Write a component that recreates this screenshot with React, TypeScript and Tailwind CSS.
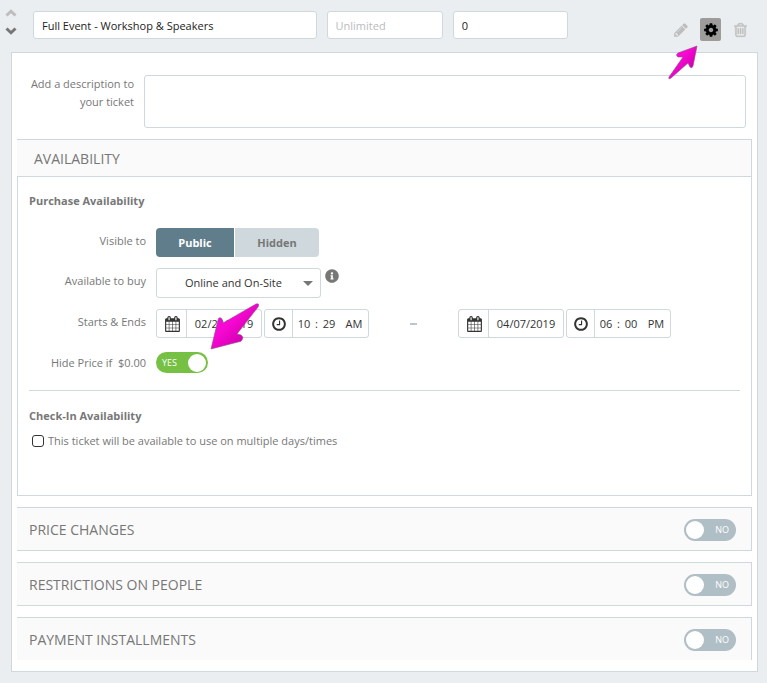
import React, { useState } from "react";
import { FaInfoCircle } from "react-icons/fa";

type IconProps = { className?: string };

const CogIcon = ({ className }: IconProps) => (
  <svg viewBox="0 0 1536 1792" fill="currentColor" className={className} aria-hidden="true">
    <path d="M1024 896q0-106-75-181t-181-75-181 75-75 181 75 181 181 75 181-75 75-181zm512-109v222q0 12-8 23t-20 13l-185 28q-19 54-39 91 35 50 107 138 10 12 10 25t-9 23q-27 37-99 108t-94 71q-12 0-26-9l-138-108q-44 23-91 38-16 136-29 186-7 28-36 28h-222q-14 0-24.500-8.500t-11.500-21.500l-28-184q-49-16-90-37l-141 107q-10 9-25 9-14 0-25-11-126-114-165-168-7-10-7-23 0-12 8-23 15-21 51-66.500t54-70.500q-27-50-41-99l-183-27q-13-2-21-12.500t-8-23.500v-222q0-12 8-23t19-13l186-28q14-46 39-92-40-57-107-138-10-12-10-24 0-10 9-23 26-36 98.500-107.500t94.500-71.500q13 0 26 10l138 107q44-23 91-38 16-136 29-186 7-28 36-28h222q14 0 24.500 8.500t11.500 21.500l28 184q49 16 90 37l142-107q9-9 24-9 13 0 25 10 129 119 165 170 7 8 7 22 0 12-8 23-15 21-51 66.500t-54 70.500q26 50 41 98l183 28q13 2 21 12.500t8 23.500z" />
  </svg>
);

const PencilIcon = ({ className }: IconProps) => (
  <svg viewBox="0 0 1536 1792" fill="currentColor" className={className} aria-hidden="true">
    <path d="M363 1536l91-91-235-235-91 91v107h128v128h107zm523-928q0-22-22-22-10 0-17 7l-542 542q-7 7-7 17 0 22 22 22 10 0 17-7l542-542q7-7 7-17zm-54-192l416 416-832 832h-416v-416zm683 96q0 53-37 90l-166 166-416-416 166-165q36-38 90-38 53 0 91 38l235 234q37 39 37 91z" />
  </svg>
);

const TrashIcon = ({ className }: IconProps) => (
  <svg viewBox="0 0 1408 1792" fill="currentColor" stroke="currentColor" strokeWidth="40" className={className} aria-hidden="true">
    <path d="M512 736v576q0 14-9 23t-23 9h-64q-14 0-23-9t-9-23v-576q0-14 9-23t23-9h64q14 0 23 9t9 23zm256 0v576q0 14-9 23t-23 9h-64q-14 0-23-9t-9-23v-576q0-14 9-23t23-9h64q14 0 23 9t9 23zm256 0v576q0 14-9 23t-23 9h-64q-14 0-23-9t-9-23v-576q0-14 9-23t23-9h64q14 0 23 9t9 23zm128 724v-948h-896v948q0 22 7 40.500t14.500 27 10.500 8.500h832q3 0 10.500-8.500t14.500-27 7-40.500zm-672-1076h448l-48-117q-7-9-17-11h-317q-10 2-17 11zm928 32v64q0 14-9 23t-23 9h-96v948q0 83-47 143.500t-113 60.500h-832q-66 0-113-58.500t-47-141.500v-952h-96q-14 0-23-9t-9-23v-64q0-14 9-23t23-9h309l70-167q15-37 54-63t79-26h320q40 0 79 26t54 63l70 167h309q14 0 23 9t9 23z" />
  </svg>
);

const ClockIcon = ({ className }: IconProps) => (
  <svg viewBox="0 0 1536 1792" fill="currentColor" className={className} aria-hidden="true">
    <path d="M896 544v448q0 14-9 23t-23 9h-320q-14 0-23-9t-9-23v-64q0-14 9-23t23-9h224v-352q0-14 9-23t23-9h64q14 0 23 9t9 23zm416 352q0-148-73-273t-198-198-273-73-273 73-198 198-73 273 73 273 198 198 273 73 273-73 198-198 73-273zm224 0q0 209-103 385.500t-279.500 279.500-385.500 103-385.500-103-279.500-279.500-103-385.500 103-385.500 279.500-279.500 385.500-103 385.500 103 279.500 279.500 103 385.500z" />
  </svg>
);

const CalendarIcon = ({ className }: IconProps) => (
  <svg viewBox="0 0 1664 1792" fill="currentColor" className={className} aria-hidden="true">
    <path d="M128 1664h288v-288h-288v288zm352 0h320v-288h-320v288zm-352-352h288v-320h-288v320zm352 0h320v-320h-320v320zm-352-384h288v-288h-288v288zm736 736h320v-288h-320v288zm-384-736h320v-288h-320v288zm768 736h288v-288h-288v288zm-384-352h320v-320h-320v320zm-352-864v-288q0-13-9.500-22.500t-22.500-9.500h-64q-13 0-22.500 9.500t-9.500 22.500v288q0 13 9.500 22.500t22.500 9.500h64q13 0 22.500-9.500t9.500-22.500zm736 864h288v-320h-288v320zm-384-384h320v-288h-320v288zm384 0h288v-288h-288v288zm32-480v-288q0-13-9.500-22.500t-22.500-9.500h-64q-13 0-22.500 9.500t-9.500 22.500v288q0 13 9.500 22.500t22.500 9.500h64q13 0 22.500-9.500t9.500-22.500zm384-64v1280q0 52-38 90t-90 38h-1408q-52 0-90-38t-38-90v-1280q0-52 38-90t90-38h128v-96q0-66 47-113t113-47h64q66 0 113 47t47 113v96h384v-96q0-66 47-113t113-47h64q66 0 113 47t47 113v96h128q52 0 90 38t38 90z" />
  </svg>
);

function Chevron({ up = false, className }: { up?: boolean; className?: string }) {
  return (
    <svg viewBox="0 0 12 8" fill="none" stroke="currentColor" strokeWidth="3" className={className} aria-hidden="true">
      <path d={up ? "M1.500 6.500L6 2.200L10.500 6.500" : "M1.500 1.500L6 5.800L10.500 1.500"} />
    </svg>
  );
}

function PinkArrow({ variant, className }: { variant: "large" | "small"; className: string }) {
  const id = "pink-" + variant;
  return (
    <svg viewBox={variant === "large" ? "0 0 52 50" : "0 0 32 38"} className={className} aria-hidden="true">
      <defs>
        <linearGradient id={id} x1="0" y1="0" x2="1" y2="1">
          <stop offset="0.4" stopColor="#f808d4" />
          <stop offset="0.7" stopColor="#d800b4" />
        </linearGradient>
      </defs>
      {variant === "large" ? (
        <path
          d="M2 47L9 18Q10 14 13 17L14 21L47 2Q51 1 49 5L28 32L32 33Q35 35 33 38Q32 40 29 40Z"
          fill={`url(#${id})`}
          stroke="#8c4c84"
          strokeWidth="0.6"
        />
      ) : (
        <path
          d="M30 3L11 10Q8 12 11 14L16 14L2 34Q1 37 4 35L21 20L23 24Q25 26 26 23Z"
          fill={`url(#${id})`}
          stroke="#8c4c84"
          strokeWidth="0.6"
        />
      )}
    </svg>
  );
}

function Toggle({ label, initial = false }: { label: string; initial?: boolean }) {
  const [on, setOn] = useState(initial);
  return (
    <button
      type="button"
      role="switch"
      aria-checked={on}
      aria-label={label}
      onClick={() => setOn(!on)}
      className={
        on
          ? "flex h-[21px] w-[52px] flex-row-reverse items-center justify-between rounded-full bg-[#76c043] pr-0.5 pl-1.5 text-[9px] text-white"
          : "flex h-[22px] w-[52px] items-center justify-between rounded-full bg-[#b0bec5] pr-[7px] pl-0.5 text-[9px] text-white"
      }
    >
      <span className="size-[18px] rounded-full bg-white" />
      {on ? "YES" : "NO"}
    </button>
  );
}

function DateField({ label, value }: { label: string; value: string }) {
  return (
    <div className="flex h-[29px] w-[106px] rounded-[3px] border border-[#cfd8dc] bg-white text-[#333]">
      <span className="flex w-[30px] shrink-0 items-center justify-center border-r border-[#cfd8dc] pl-0.5">
        <CalendarIcon className="h-4 w-[15px]" />
      </span>
      <input aria-label={label} defaultValue={value} className="w-full min-w-0 bg-transparent text-center text-[11px] outline-none" />
    </div>
  );
}

function TimeField({ label, hour, minute, period }: { label: string; hour: string; minute: string; period: string }) {
  return (
    <div className="flex h-[29px] w-[105px] items-center rounded-[3px] border border-[#cfd8dc] bg-white text-[#333]">
      <span className="flex w-7 shrink-0 items-center justify-center self-stretch border-r border-[#cfd8dc]">
        <ClockIcon className="h-4 w-3.5" />
      </span>
      <input aria-label={label + " hour"} defaultValue={hour} className="ml-0.5 w-[18px] bg-transparent text-center text-[11px] outline-none" />
      <span className="w-[7px] text-center">:</span>
      <input aria-label={label + " minute"} defaultValue={minute} className="w-[18px] bg-transparent text-center text-[11px] outline-none" />
      <input aria-label={label + " period"} defaultValue={period} className="ml-1 w-6 bg-transparent text-center text-[11px] outline-none" />
    </div>
  );
}

function CollapsedSection({ title, last = false }: { title: string; last?: boolean }) {
  return (
    <section
      className={
        last
          ? "mt-[11px] flex h-[43px] items-center justify-between border-t border-r border-[#cfd8dc] bg-[#fafafa] pt-0.5 pr-[15px] pl-3"
          : "mt-[11px] flex h-11 items-center justify-between border-y border-r border-[#cfd8dc] bg-[#fafafa] pt-0.5 pr-[15px] pl-3"
      }
    >
      <h2 className="text-sm">{title}</h2>
      <Toggle label={title} />
    </section>
  );
}

const field = "h-7 min-w-0 rounded-[3px] border border-[#cfd8dc] bg-white px-2 text-[11px] text-[#222] outline-none placeholder:text-[#b8bcbe]";
const rowLabel = "w-[117px] shrink-0 text-right";

export default function App() {
  const [visible, setVisible] = useState("public");
  return (
    <main className="relative min-h-screen bg-[#eaeef1] pr-[9px] pb-[11px] pl-[11px] font-['Open_Sans',sans-serif] text-[11px] leading-[18px] text-[#777]">
      <header className="-ml-1.5 flex h-[52px] items-start pt-[11px]">
        <div className="-mt-0.5 flex w-[13px] shrink-0 flex-col gap-2.5">
          <button type="button" aria-label="Move up" className="text-[#bdbdbd]">
            <Chevron up className="h-2 w-3" />
          </button>
          <button type="button" aria-label="Move down" className="text-[#777]">
            <Chevron className="h-2 w-3" />
          </button>
        </div>
        <div className="ml-[15px] grid min-w-0 flex-1 grid-cols-[283fr_116fr_115fr] gap-2.5">
          <input aria-label="Ticket name" defaultValue="Full Event - Workshop & Speakers" className={field} />
          <input aria-label="Quantity" placeholder="Unlimited" className={field} />
          <input aria-label="Price" defaultValue="0" className={field} />
        </div>
        <div className="ml-[102px] flex shrink-0 items-center gap-[9px] pt-[7px] pr-[7px]">
          <button type="button" aria-label="Edit" className="flex size-[21px] items-center justify-center text-[#bdbdbd]">
            <PencilIcon className="h-4 w-3.5" />
          </button>
          <button type="button" aria-label="Settings" className="flex h-[23px] w-[21px] items-center justify-center rounded-[2px] bg-[#9e9b9b] text-black">
            <CogIcon className="h-4 w-3.5" />
          </button>
          <button type="button" aria-label="Delete" className="flex size-[21px] items-center justify-center text-[#bdbdbd]">
            <TrashIcon className="h-4 w-[13px]" />
          </button>
        </div>
      </header>
      <PinkArrow variant="small" className="pointer-events-none absolute top-[43px] right-[68px] h-[38px] w-8" />

      <div className="border border-[#cfd8dc] bg-white px-[5px] pb-[11px]">
        <div className="flex pt-[22px] pr-1.5 pb-[11px]">
          <label htmlFor="description" className="mr-2.5 w-[117px] shrink-0 pl-2 text-right">
            Add a description to your ticket
          </label>
          <textarea id="description" className="h-[53px] min-w-0 flex-1 resize-none rounded-[3px] border border-[#cfd8dc] bg-white p-2 text-[#222] outline-none" />
        </div>

        <section>
          <h2 className="flex h-[37px] items-center border-t border-r border-[#cfd8dc] bg-[#fafafa] pt-0.5 pl-[17px] text-sm">AVAILABILITY</h2>
          <div className="relative border border-[#cfd8dc] px-[11px] pt-[15px] pb-[45px]">
            <h3 className="font-bold">Purchase Availability</h3>

            <div className="mt-[18px] flex">
              <span className={rowLabel + " pt-1"}>Visible to</span>
              <div className="ml-2.5 flex gap-px" role="group" aria-label="Visible to">
                <button
                  type="button"
                  aria-pressed={visible === "public"}
                  onClick={() => setVisible("public")}
                  className="h-[29px] w-[78px] rounded-l-[4px] bg-[#cfd8dc] font-bold aria-pressed:bg-[#607d8b] aria-pressed:text-white"
                >
                  Public
                </button>
                <button
                  type="button"
                  aria-pressed={visible === "hidden"}
                  onClick={() => setVisible("hidden")}
                  className="h-[29px] w-[84px] rounded-r-[4px] bg-[#cfd8dc] font-bold aria-pressed:bg-[#607d8b] aria-pressed:text-white"
                >
                  Hidden
                </button>
              </div>
            </div>

            <div className="mt-[11px] flex">
              <label htmlFor="available" className={rowLabel + " pt-1"}>Available to buy</label>
              <div className="ml-2.5 grid w-[165px] items-center">
                <select id="available" className="col-start-1 row-start-1 h-[30px] appearance-none rounded-[3px] border border-[#cfd8dc] bg-white pr-4 pl-7 text-[11px] text-[#333] outline-none">
                  <option>Online and On-Site</option>
                  <option>Online</option>
                  <option>On-Site</option>
                </select>
                <span className="pointer-events-none col-start-1 row-start-1 mr-2 justify-self-end border-x-5 border-t-5 border-x-transparent border-t-[#777]" />
              </div>
              <button type="button" aria-label="More information" className="ml-1 flex size-3.5 items-center pt-0.5">
                <FaInfoCircle className="size-3.5 shrink-0" />
              </button>
            </div>

            <div className="mt-[11px] flex">
              <span className={rowLabel + " pt-1"}>Starts &amp; Ends</span>
              <div className="ml-2.5 flex items-center gap-0.5">
                <DateField label="Start date" value="02/22/2019" />
                <TimeField label="Start" hour="10" minute="29" period="AM" />
              </div>
              <div className="mx-[41px] flex w-[7px] items-center">
                <span className="h-0.5 w-[7px] bg-[#bfc6cb]" />
              </div>
              <div className="flex items-center gap-0.5">
                <DateField label="End date" value="04/07/2019" />
                <TimeField label="End" hour="06" minute="00" period="PM" />
              </div>
            </div>

            <div className="mt-3.5 flex">
              <span className={rowLabel + " pt-0.5"}>Hide Price if &nbsp;$0.00</span>
              <div className="ml-2.5">
                <Toggle label="Hide price if $0.00" initial />
              </div>
            </div>
            <PinkArrow variant="large" className="pointer-events-none absolute top-[125px] left-[191px] h-[50px] w-[52px]" />

            <hr className="mt-[17px] border-[#cfd8dc]" />

            <h3 className="mt-4 font-bold">Check-In Availability</h3>
            <div className="mt-[7px] flex items-center gap-1 pl-[3px]">
              <input id="multi" type="checkbox" className="size-3 appearance-none rounded-[3px] border border-[#333] bg-white checked:bg-[#607d8b]" />
              <label htmlFor="multi">This ticket will be available to use on multiple days/times</label>
            </div>
          </div>
        </section>

        <CollapsedSection title="PRICE CHANGES" />
        <CollapsedSection title="RESTRICTIONS ON PEOPLE" />
        <CollapsedSection title="PAYMENT INSTALLMENTS" last />
      </div>
    </main>
  );
}
